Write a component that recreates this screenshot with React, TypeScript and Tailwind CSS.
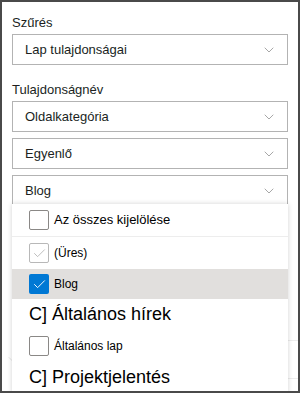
import { ChevronDown, Check } from 'lucide-react';

const font = { fontFamily: '"Liberation Sans", Arial, sans-serif' };

function Select({ value }: { value: string }) {
  return (
    <div className="flex h-[31px] w-[276px] items-center justify-between border border-[#b3b3b3] bg-white pl-[12px] pr-[10px]">
      <span className="text-[13px] text-[#201f1e]">{value}</span>
      <ChevronDown size={16} strokeWidth={1} className="text-[#7a7a7a]" />
    </div>
  );
}

function Box({ state }: { state: 'off' | 'dim' | 'on' }) {
  if (state === 'on') {
    return (
      <div className="flex h-[20px] w-[20px] items-center justify-center rounded-[2px] bg-[#0078d4]">
        <Check size={15} strokeWidth={1.5} className="text-white" />
      </div>
    );
  }
  return (
    <div
      className={`flex h-[20px] w-[20px] items-center justify-center rounded-[2px] border bg-white ${
        state === 'dim' ? 'border-[#b8b8b8]' : 'border-[#8a8886]'
      }`}
    >
      {state === 'dim' && <Check size={15} strokeWidth={1.2} className="text-[#a8a8a8]" />}
    </div>
  );
}

export default function App() {
  return (
    <div
      className="relative h-[393px] w-[300px] overflow-hidden border-2 border-[#4a4a4a] bg-white"
      style={font}
    >
      <div className="flex flex-col pl-[10px] pt-[11px]">
        <div className="mb-[2px] text-[13px] leading-[19px] text-[#201f1e]">Szűrés</div>
        <Select value="Lap tulajdonságai" />
        <div className="mb-[2px] mt-[15px] text-[13px] leading-[19px] text-[#201f1e]">Tulajdonságnév</div>
        <div className="flex flex-col gap-[6px]">
          <Select value="Oldalkategória" />
          <Select value="Egyenlő" />
          <Select value="Blog" />
        </div>

        {/* section hidden behind the open list */}
        <div className="mt-[134px] h-[38px] border-t border-[#ececec]">
          <ChevronDown size={12} strokeWidth={1} className="ml-[-6px] mt-[12px] text-[#c8c8c8]" />
        </div>
        <div className="border-t border-[#ececec]" />
      </div>

      {/* open dropdown list */}
      <div className="absolute left-[10px] top-[202px] w-[276px] bg-white shadow-[0_0_5px_rgba(0,0,0,0.18)]">
        <div className="flex h-[33px] items-center gap-[5px] border-b border-[#ededed] pl-[17px]">
          <Box state="off" />
          <span className="text-[13px] text-black">Az összes kijelölése</span>
        </div>
        <div className="flex h-[32px] items-center gap-[5px] pl-[17px]">
          <Box state="dim" />
          <span className="text-[12px] text-black">(Üres)</span>
        </div>
        <div className="flex h-[30px] items-center gap-[5px] bg-[#e1dfdd] pl-[17px]">
          <Box state="on" />
          <span className="text-[12px] text-black">Blog</span>
        </div>
        <div className="flex h-[31px] items-center pl-[17px] text-[18px] text-black">C] Általános hírek</div>
        <div className="flex h-[32px] items-center gap-[5px] pl-[17px]">
          <Box state="off" />
          <span className="text-[12px] text-black">Általános lap</span>
        </div>
        <div className="flex h-[31px] items-center pl-[17px] text-[18px] text-black">C] Projektjelentés</div>
      </div>
    </div>
  );
}
